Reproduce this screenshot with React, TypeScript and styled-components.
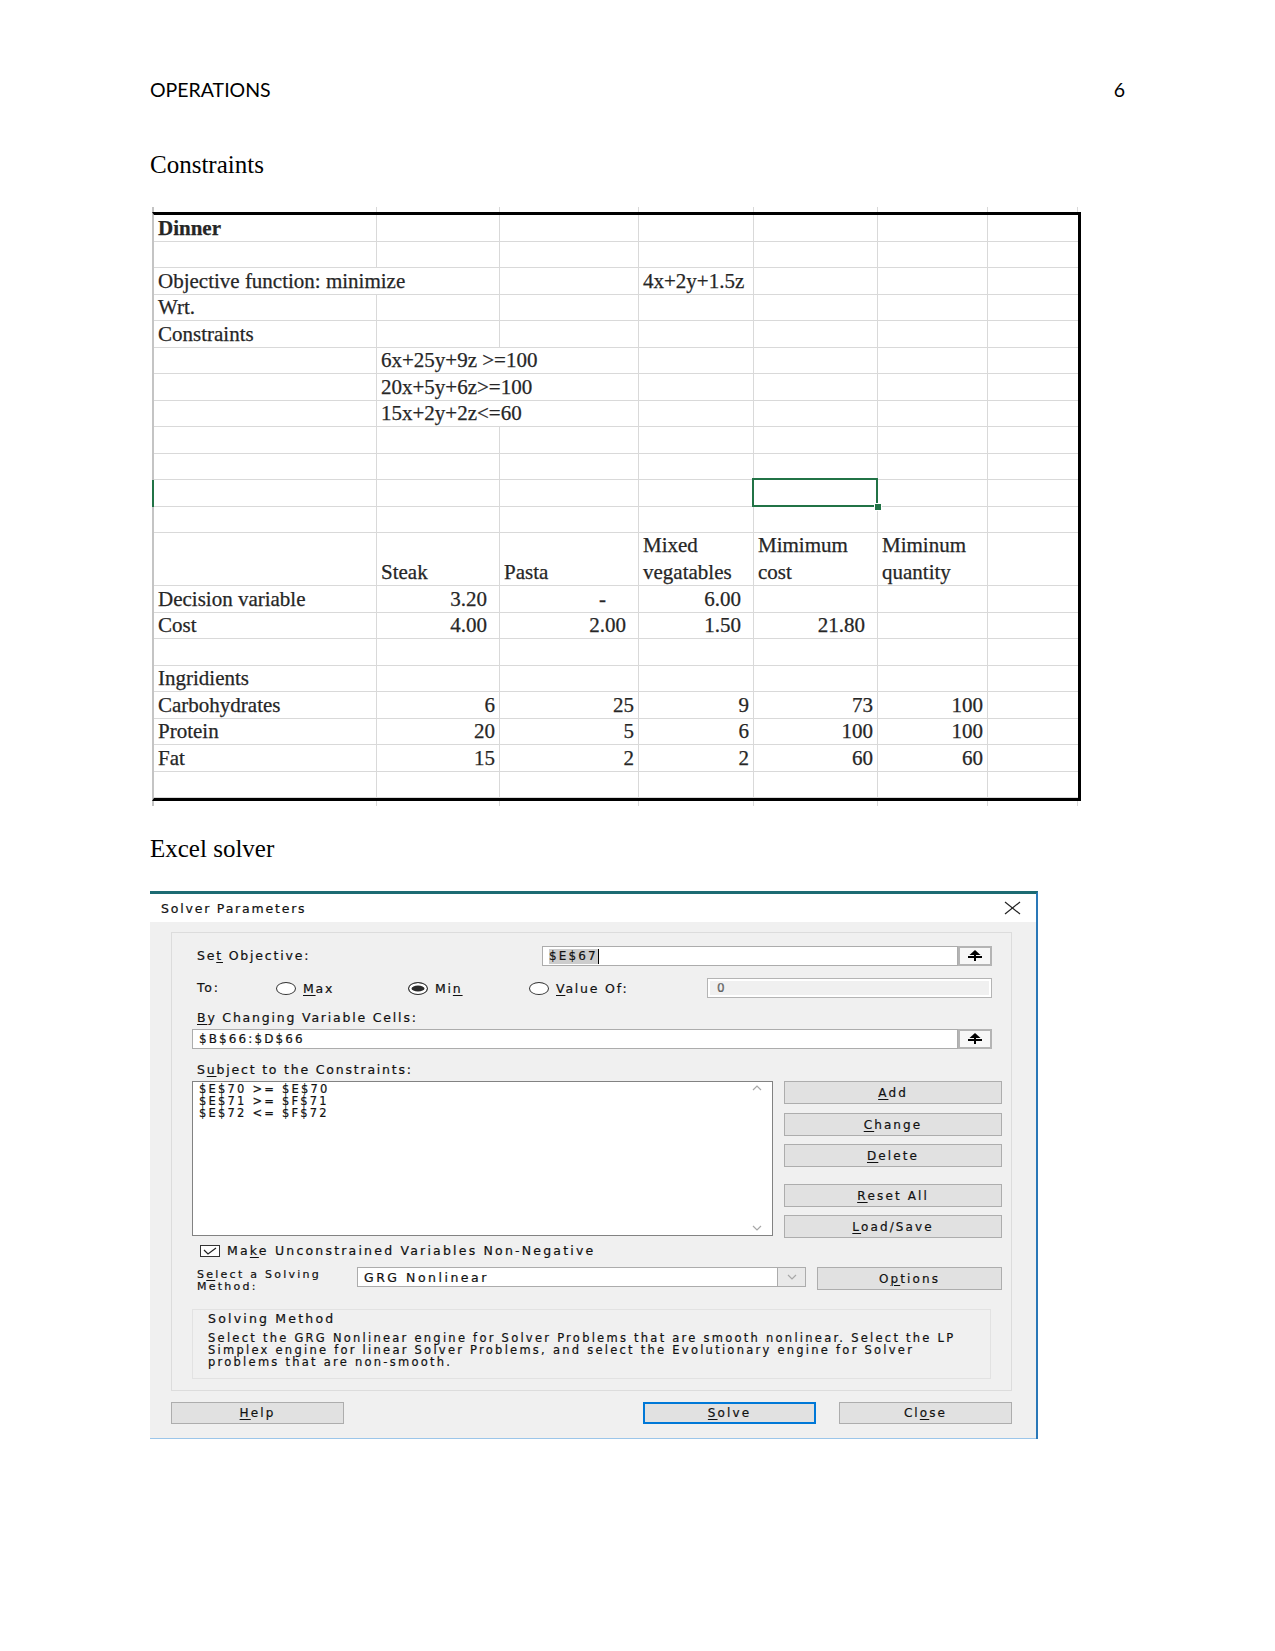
import React from "react";
import styled, { createGlobalStyle, css } from "styled-components";

const GlobalStyle = createGlobalStyle`
  html, body { margin: 0; padding: 0; background: #ffffff; }
  body { font-family: "Liberation Serif", serif; }
`;

const Page = styled.div`
  width: 1275px;
  min-height: 1651px;
  box-sizing: border-box;
  padding: 74px 0 0 150px;
`;

const RunningHead = styled.header`
  display: flex;
  justify-content: space-between;
  width: 975px;
  font-family: Lato, "Liberation Sans", sans-serif;
  font-size: 19.5px;
  line-height: 32px;
  color: #000;
`;

const SectionTitle = styled.h2<{ $top: number }>`
  margin: ${(p) => p.$top}px 0 0;
  font-family: "Liberation Serif", serif;
  font-weight: normal;
  font-size: 25px;
  line-height: 30px;
  color: #000;
`;

/* ---------------- spreadsheet ---------------- */

const COLS = "223px 123px 139px 115px 124px 110px 90px";
const GRID_LINE = "#d9d9d9";
const XL_GREEN = "#217346";

const Sheet = styled.div`
  margin: 27px 0 0 2px;
  width: 929px;
  font-family: "Liberation Serif", serif;
  font-size: 21px;
  color: #262626;
  -webkit-text-stroke: 0.25px #262626;
`;

const StubRow = styled.div`
  display: grid;
  grid-template-columns: ${COLS};
  height: 5px;
  border-left: 2px solid #c4c4c4;
  padding-right: 3px;
`;

const StubCell = styled.span`
  border-right: 1px solid ${GRID_LINE};
`;

const Grid = styled.div`
  display: grid;
  grid-template-columns: ${COLS};
  grid-auto-rows: 26.5px;
  border-top: 3px solid #000;
  border-right: 3px solid #000;
  border-bottom: 3px solid #000;
  border-left: 2px solid #c4c4c4;
`;

type CellKind = "text" | "acc" | "int" | "dash";

const padRight: Record<CellKind, number> = { text: 4, acc: 12, int: 4, dash: 32 };

const Cell = styled.div<{
  $kind: CellKind;
  $span: number;
  $rows: number;
  $bold: boolean;
  $last: boolean;
  $selected: boolean;
  $activeRow: boolean;
}>`
  position: relative;
  display: flex;
  align-items: flex-end;
  justify-content: ${(p) => (p.$kind === "text" ? "flex-start" : "flex-end")};
  box-sizing: border-box;
  min-width: 0;
  padding: 0 ${(p) => padRight[p.$kind]}px 0 4px;
  border-right: ${(p) => (p.$last ? "none" : `1px solid ${GRID_LINE}`)};
  border-bottom: 1px solid ${GRID_LINE};
  line-height: ${(p) => (p.$rows > 1 ? "26.5px" : "25px")};
  white-space: pre;
  font-weight: ${(p) => (p.$bold ? 700 : 400)};
  grid-column: span ${(p) => p.$span};
  grid-row: span ${(p) => p.$rows};

  ${(p) =>
    p.$selected &&
    css`
      &::before {
        content: "";
        position: absolute;
        left: -2px;
        top: -2px;
        right: -1px;
        bottom: -1px;
        border: 2px solid ${XL_GREEN};
        z-index: 1;
      }
      &::after {
        content: "";
        position: absolute;
        right: -5px;
        bottom: -5px;
        width: 6px;
        height: 6px;
        background: ${XL_GREEN};
        border: 1px solid #fff;
        z-index: 2;
      }
    `}

  ${(p) =>
    p.$activeRow &&
    css`
      &::before {
        content: "";
        position: absolute;
        left: -2px;
        top: 0;
        bottom: -1px;
        width: 2px;
        background: ${XL_GREEN};
      }
    `}
`;

type CellSpec = {
  t?: string;
  k?: CellKind;
  span?: number;
  bold?: boolean;
  sel?: boolean;
  act?: boolean;
};

const empty = (n: number): CellSpec[] => Array.from({ length: n }, () => ({}));

const rows: { cells: CellSpec[]; tall?: boolean }[] = [
  { cells: [{ t: "Dinner", bold: true }, ...empty(6)] },
  { cells: empty(7) },
  { cells: [{ t: "Objective function: minimize", span: 2 }, {}, { t: "4x+2y+1.5z" }, ...empty(3)] },
  { cells: [{ t: "Wrt." }, ...empty(6)] },
  { cells: [{ t: "Constraints" }, ...empty(6)] },
  { cells: [{}, { t: "6x+25y+9z >=100", span: 2 }, ...empty(4)] },
  { cells: [{}, { t: "20x+5y+6z>=100", span: 2 }, ...empty(4)] },
  { cells: [{}, { t: "15x+2y+2z<=60", span: 2 }, ...empty(4)] },
  { cells: empty(7) },
  { cells: empty(7) },
  { cells: [{ act: true }, {}, {}, {}, { sel: true }, {}, {}] },
  { cells: empty(7) },
  {
    tall: true,
    cells: [
      {},
      { t: "Steak" },
      { t: "Pasta" },
      { t: "Mixed\nvegatables" },
      { t: "Mimimum\ncost" },
      { t: "Miminum\nquantity" },
      {},
    ],
  },
  {
    cells: [
      { t: "Decision variable" },
      { t: "3.20", k: "acc" },
      { t: "-", k: "dash" },
      { t: "6.00", k: "acc" },
      {},
      {},
      {},
    ],
  },
  {
    cells: [
      { t: "Cost" },
      { t: "4.00", k: "acc" },
      { t: "2.00", k: "acc" },
      { t: "1.50", k: "acc" },
      { t: "21.80", k: "acc" },
      {},
      {},
    ],
  },
  { cells: empty(7) },
  { cells: [{ t: "Ingridients" }, ...empty(6)] },
  {
    cells: [
      { t: "Carbohydrates" },
      { t: "6", k: "int" },
      { t: "25", k: "int" },
      { t: "9", k: "int" },
      { t: "73", k: "int" },
      { t: "100", k: "int" },
      {},
    ],
  },
  {
    cells: [
      { t: "Protein" },
      { t: "20", k: "int" },
      { t: "5", k: "int" },
      { t: "6", k: "int" },
      { t: "100", k: "int" },
      { t: "100", k: "int" },
      {},
    ],
  },
  {
    cells: [
      { t: "Fat" },
      { t: "15", k: "int" },
      { t: "2", k: "int" },
      { t: "2", k: "int" },
      { t: "60", k: "int" },
      { t: "60", k: "int" },
      {},
    ],
  },
  { cells: empty(7) },
];

function Spreadsheet() {
  return (
    <Sheet>
      <StubRow>
        {empty(7).map((_, i) => (
          <StubCell key={i} />
        ))}
      </StubRow>
      <Grid>
        {rows.map((row, ri) => {
          let col = 0;
          return row.cells.map((c, ci) => {
            const span = c.span ?? 1;
            col += span;
            return (
              <Cell
                key={`${ri}-${ci}`}
                $kind={c.k ?? "text"}
                $span={span}
                $rows={row.tall ? 2 : 1}
                $bold={!!c.bold}
                $last={col === 7}
                $selected={!!c.sel}
                $activeRow={!!c.act}
              >
                {c.t ?? ""}
              </Cell>
            );
          });
        })}
      </Grid>
      <StubRow>
        {empty(7).map((_, i) => (
          <StubCell key={i} />
        ))}
      </StubRow>
    </Sheet>
  );
}

/* ---------------- solver dialog ---------------- */

const Dialog = styled.section`
  margin-top: 27px;
  width: 888px;
  box-sizing: border-box;
  border-top: 3px solid #1d6b73;
  border-right: 2px solid #2a78b8;
  font-family: "DejaVu Sans", Verdana, sans-serif;
  font-size: 12.5px;
  letter-spacing: 1.8px;
  color: #111;
  -webkit-text-stroke: 0.2px #111;
`;

const TitleBar = styled.div`
  display: flex;
  align-items: center;
  justify-content: space-between;
  height: 28px;
  background: #ffffff;
  padding: 0 15px 0 11px;
`;

const TitleText = styled.span`
  font-size: 12.5px;
  letter-spacing: 1.8px;
  color: #111;
`;

const Body = styled.div`
  background: #f0f0f0;
  padding: 10px 24px 14px 21px;
  border-bottom: 1px solid #9cc6ea;
`;

const GroupBox = styled.div`
  border: 1px solid #dcdcdc;
  padding: 13px 9px 11px 20px;
`;

const FieldRow = styled.div<{ $top?: number }>`
  display: flex;
  align-items: center;
  height: 20px;
  margin-top: ${(p) => p.$top ?? 0}px;
`;

const Label = styled.div<{ $w?: number; $top?: number }>`
  ${(p) => (p.$w ? `width: ${p.$w}px; flex: none;` : "")}
  box-sizing: border-box;
  padding-left: 5px;
  margin-top: ${(p) => p.$top ?? 0}px;
  line-height: 14px;
  white-space: nowrap;
`;

const Key = styled.u`
  text-decoration-thickness: 1px;
  text-underline-offset: 2px;
`;

const Field = styled.div<{ $mt?: number }>`
  flex: 1;
  display: flex;
  height: 20px;
  margin: ${(p) => p.$mt ?? 0}px 10px 0 0;
`;

const FieldBox = styled.div<{ $disabled?: boolean }>`
  flex: 1;
  display: flex;
  align-items: center;
  box-sizing: border-box;
  padding-left: ${(p) => (p.$disabled ? 9 : 6)}px;
  border: 1px solid ${(p) => (p.$disabled ? "#b4b4b4" : "#acacac")};
  background: ${(p) => (p.$disabled ? "#f0f0f0" : "#ffffff")};
  box-shadow: ${(p) => (p.$disabled ? "inset 0 0 0 2px #ffffff" : "none")};
  color: ${(p) => (p.$disabled ? "#7a7a7a" : "#111")};
  font-size: 12px;
  letter-spacing: 2.1px;
  white-space: nowrap;
`;

const SelectedText = styled.span`
  background: #cdcdcd;
  line-height: 15px;
`;

const Caret = styled.span`
  display: inline-block;
  width: 1px;
  height: 15px;
  background: #000;
`;

const RangeButton = styled.div`
  width: 34px;
  flex: none;
  box-sizing: border-box;
  display: flex;
  align-items: center;
  justify-content: center;
  border: 2px solid #b4b4b4;
  background: #f7f7f7;
`;

const RadioOption = styled.div<{ $w: number }>`
  width: ${(p) => p.$w}px;
  flex: none;
  display: flex;
  align-items: center;
  gap: 7px;
`;

const RadioDot = styled.span<{ $checked?: boolean }>`
  width: 20px;
  height: 13px;
  box-sizing: border-box;
  border: 1.5px solid #333;
  border-radius: 50%;
  background: ${(p) => (p.$checked ? "#2b2b2b" : "#ffffff")};
  box-shadow: ${(p) => (p.$checked ? "inset 0 0 0 2.5px #ffffff" : "none")};
`;

const ConstraintArea = styled.div`
  display: flex;
  margin-top: 4px;
`;

const ListBox = styled.div`
  width: 581px;
  height: 155px;
  flex: none;
  box-sizing: border-box;
  display: flex;
  border: 1px solid #828282;
  background: #ffffff;
`;

const ListLines = styled.div`
  flex: 1;
  padding: 1px 0 0 6px;
  font-size: 11.5px;
  letter-spacing: 2.2px;
  line-height: 12px;
  white-space: pre;
`;

const ScrollColumn = styled.div`
  width: 30px;
  display: flex;
  flex-direction: column;
  justify-content: space-between;
  align-items: center;
  padding: 3px 0 4px;
`;

const SideButtons = styled.div`
  margin-left: 11px;
  width: 218px;
  display: flex;
  flex-direction: column;
`;

const Button = styled.div<{ $w?: number; $h?: number; $mt?: number; $ml?: number; $primary?: boolean }>`
  ${(p) => (p.$w ? `width: ${p.$w}px; flex: none;` : "")}
  height: ${(p) => p.$h ?? 23}px;
  margin: ${(p) => p.$mt ?? 0}px 0 0 ${(p) => p.$ml ?? 0}px;
  box-sizing: border-box;
  display: flex;
  align-items: center;
  justify-content: center;
  background: #e1e1e1;
  border: ${(p) => (p.$primary ? "2px solid #0078d7" : "1px solid #adadad")};
  font-size: 12px;
  letter-spacing: 2.1px;
`;

const CheckRow = styled.div`
  display: flex;
  align-items: center;
  height: 12px;
  line-height: 12px;
  margin: 7px 0 0 8px;
  gap: 7px;
  letter-spacing: 2.2px;
`;

const CheckBox = styled.span`
  width: 20px;
  height: 12px;
  box-sizing: border-box;
  border: 1px solid #333;
  background: #fff;
  display: flex;
  align-items: center;
  justify-content: center;
`;

const MethodRow = styled.div`
  display: flex;
  align-items: flex-start;
  height: 23px;
  margin-top: 10px;
`;

const MethodLabel = styled.div`
  width: 165px;
  flex: none;
  box-sizing: border-box;
  padding: 2px 0 0 5px;
  font-size: 11px;
  letter-spacing: 2.25px;
`;

const MethodLine = styled.div`
  height: 12px;
  line-height: 12px;
  white-space: nowrap;
`;

const Combo = styled.div`
  width: 449px;
  height: 20px;
  flex: none;
  box-sizing: border-box;
  display: flex;
  border: 1px solid #acacac;
  background: #ffffff;
`;

const ComboText = styled.div`
  flex: 1;
  display: flex;
  align-items: center;
  padding-left: 6px;
  font-size: 12.5px;
  letter-spacing: 2.5px;
`;

const ComboButton = styled.div`
  width: 27px;
  display: flex;
  align-items: center;
  justify-content: center;
  border-left: 1px solid #acacac;
  background: #e9e9e9;
`;

const MethodGroup = styled.div`
  width: 799px;
  height: 70px;
  box-sizing: border-box;
  margin-top: 19px;
  padding: 3px 0 0 15px;
  border: 1px solid #e2e2e2;
`;

const MethodTitle = styled.div`
  line-height: 12px;
  font-size: 12.5px;
  letter-spacing: 2.2px;
`;

const MethodDesc = styled.p`
  margin: 7px 0 0;
  font-size: 11.5px;
  letter-spacing: 2.25px;
  line-height: 12px;
  white-space: pre;
`;

const Footer = styled.div`
  display: flex;
  justify-content: space-between;
  margin-top: 11px;
`;

const FooterRight = styled.div`
  display: flex;
  gap: 23px;
`;

function UpArrowIcon() {
  return (
    <svg width="14" height="12" viewBox="0 0 14 12">
      <polygon points="7,0 1.5,5 12.5,5" fill="#000" />
      <rect x="0" y="6" width="14" height="2" fill="#000" />
      <rect x="6" y="4" width="2" height="7" fill="#000" />
    </svg>
  );
}

function Chevron({ dir }: { dir: "up" | "down" }) {
  return (
    <svg width="10" height="6" viewBox="0 0 10 6">
      <polyline
        points={dir === "up" ? "1,5 5,1 9,5" : "1,1 5,5 9,1"}
        fill="none"
        stroke="#a8a8a8"
        strokeWidth="1.2"
      />
    </svg>
  );
}

function CloseIcon() {
  return (
    <svg width="17" height="14" viewBox="0 0 17 14">
      <line x1="1" y1="1" x2="16" y2="13" stroke="#222" strokeWidth="1.2" />
      <line x1="16" y1="1" x2="1" y2="13" stroke="#222" strokeWidth="1.2" />
    </svg>
  );
}

function CheckIcon() {
  return (
    <svg width="14" height="8" viewBox="0 0 14 8">
      <polyline points="1,3 5,7 13,1" fill="none" stroke="#222" strokeWidth="1.2" />
    </svg>
  );
}

function SolverDialog() {
  return (
    <Dialog>
      <TitleBar>
        <TitleText>Solver Parameters</TitleText>
        <CloseIcon />
      </TitleBar>
      <Body>
        <GroupBox>
          <FieldRow>
            <Label $w={350}>
              Se<Key>t</Key> Objective:
            </Label>
            <Field>
              <FieldBox>
                <SelectedText>$E$67</SelectedText>
                <Caret />
              </FieldBox>
              <RangeButton>
                <UpArrowIcon />
              </RangeButton>
            </Field>
          </FieldRow>

          <FieldRow $top={12}>
            <Label $w={84}>To:</Label>
            <RadioOption $w={132}>
              <RadioDot />
              <span>
                <Key>M</Key>ax
              </span>
            </RadioOption>
            <RadioOption $w={121}>
              <RadioDot $checked />
              <span>
                Mi<Key>n</Key>
              </span>
            </RadioOption>
            <RadioOption $w={178}>
              <RadioDot />
              <span>
                <Key>V</Key>alue Of:
              </span>
            </RadioOption>
            <Field>
              <FieldBox $disabled>0</FieldBox>
            </Field>
          </FieldRow>

          <Label $top={13}>
            <Key>B</Key>y Changing Variable Cells:
          </Label>
          <Field $mt={4}>
            <FieldBox>$B$66:$D$66</FieldBox>
            <RangeButton>
              <UpArrowIcon />
            </RangeButton>
          </Field>

          <Label $top={14}>
            S<Key>u</Key>bject to the Constraints:
          </Label>
          <ConstraintArea>
            <ListBox>
              <ListLines>
                {"$E$70 >= $E$70\n$E$71 >= $F$71\n$E$72 <= $F$72"}
              </ListLines>
              <ScrollColumn>
                <Chevron dir="up" />
                <Chevron dir="down" />
              </ScrollColumn>
            </ListBox>
            <SideButtons>
              <Button>
                <Key>A</Key>dd
              </Button>
              <Button $mt={9}>
                <Key>C</Key>hange
              </Button>
              <Button $mt={8}>
                <Key>D</Key>elete
              </Button>
              <Button $mt={17}>
                <Key>R</Key>eset All
              </Button>
              <Button $mt={8}>
                <Key>L</Key>oad/Save
              </Button>
            </SideButtons>
          </ConstraintArea>

          <CheckRow>
            <CheckBox>
              <CheckIcon />
            </CheckBox>
            <span>
              Ma<Key>k</Key>e Unconstrained Variables Non-Negative
            </span>
          </CheckRow>

          <MethodRow>
            <MethodLabel>
              <MethodLine>
                S<Key>e</Key>lect a Solving
              </MethodLine>
              <MethodLine>Method:</MethodLine>
            </MethodLabel>
            <Combo>
              <ComboText>GRG Nonlinear</ComboText>
              <ComboButton>
                <Chevron dir="down" />
              </ComboButton>
            </Combo>
            <Button $w={185} $ml={11}>
              O<Key>p</Key>tions
            </Button>
          </MethodRow>

          <MethodGroup>
            <MethodTitle>Solving Method</MethodTitle>
            <MethodDesc>
              {
                "Select the GRG Nonlinear engine for Solver Problems that are smooth nonlinear. Select the LP\nSimplex engine for linear Solver Problems, and select the Evolutionary engine for Solver\nproblems that are non-smooth."
              }
            </MethodDesc>
          </MethodGroup>
        </GroupBox>

        <Footer>
          <Button $w={173} $h={22}>
            <Key>H</Key>elp
          </Button>
          <FooterRight>
            <Button $w={173} $h={22} $primary>
              <Key>S</Key>olve
            </Button>
            <Button $w={173} $h={22}>
              Cl<Key>o</Key>se
            </Button>
          </FooterRight>
        </Footer>
      </Body>
    </Dialog>
  );
}

export default function App() {
  return (
    <>
      <GlobalStyle />
      <Page>
        <RunningHead>
          <span>OPERATIONS</span>
          <span>6</span>
        </RunningHead>
        <SectionTitle $top={44}>Constraints</SectionTitle>
        <Spreadsheet />
        <SectionTitle $top={28}>Excel solver</SectionTitle>
        <SolverDialog />
      </Page>
    </>
  );
}
